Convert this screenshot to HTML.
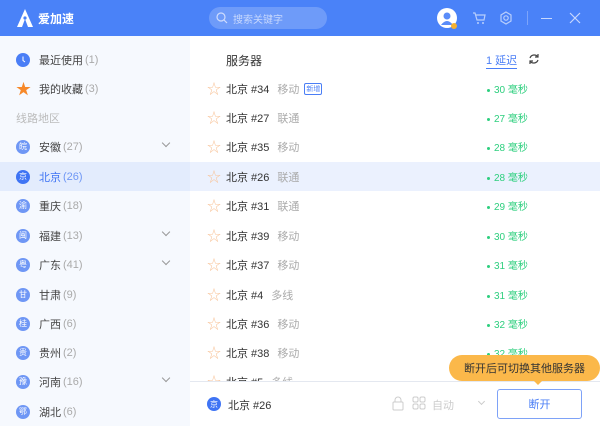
<!DOCTYPE html>
<html><head><meta charset="utf-8">
<style>
*{margin:0;padding:0;box-sizing:border-box}
body{width:600px;height:426px;overflow:hidden;font-family:"Liberation Sans","Noto Sans CJK SC",sans-serif;font-size:11px;color:#333;background:#fff;position:relative}
.hd{position:absolute;left:0;top:0;width:600px;height:36px;background:#4a82f8}
.side{position:absolute;left:0;top:36px;width:190px;height:390px;background:#f6f9fe}
.ab{position:absolute}
.si{position:absolute;left:0;width:190px;height:29px;display:flex;align-items:center;padding-left:16px;color:#444}
.si .c{width:14px;height:14px;border-radius:50%;background:#6f97f5;color:#fff;font-size:8px;display:flex;align-items:center;justify-content:center;margin-right:9px}
.si .n{color:#aaa;margin-left:2px}
.si .ch{position:absolute;left:163px;top:8px;width:6px;height:6px;border-right:1px solid #999;border-bottom:1px solid #999;transform:rotate(45deg)}
.r{position:absolute;left:190px;width:410px;height:29px;display:flex;align-items:center;padding-left:17px}
.r .st{color:#f8c49a;font-size:14px;width:19px}
.r .nm{color:#333}
.r .t{color:#aaa;margin-left:8px}
.r .ms{position:absolute;left:297px;color:#2dcf7e;font-size:10px}
.r .ms:before{content:"";display:inline-block;width:3px;height:3px;border-radius:50%;background:#2dcf7e;margin-right:4px;vertical-align:middle}
</style></head><body>
<div class="hd">
 <svg class="ab" style="left:16px;top:8px" width="18" height="20" viewBox="0 0 18 20"><path d="M9 1 L17 19 L12 19 L9 11 L6 19 L1 19 Z" fill="#fff"/><circle cx="9" cy="10" r="1.6" fill="#4a82f8"/></svg>
 <div class="ab" style="left:38px;top:10px;color:#fff;font-size:12px;font-weight:bold">爱加速</div>
 <div class="ab" style="left:209px;top:7px;width:118px;height:22px;border-radius:11px;background:#6e9bf9"></div>
 <svg class="ab" style="left:216px;top:12px" width="12" height="12"><circle cx="5" cy="5" r="4" stroke="#cfdcfd" fill="none" stroke-width="1.2"/><line x1="8" y1="8" x2="11" y2="11" stroke="#cfdcfd" stroke-width="1.2"/></svg>
 <div class="ab" style="left:233px;top:11px;color:#c8d8fd;font-size:10px">搜索关键字</div>
 <div class="ab" style="left:437px;top:8px;width:20px;height:20px;border-radius:50%;background:#fff"></div>
 <svg class="ab" style="left:437px;top:8px" width="22" height="22"><circle cx="10" cy="8" r="3.5" fill="#5a8cf9"/><path d="M4 17 Q10 9 16 17" fill="#5a8cf9"/><circle cx="17" cy="18" r="3" fill="#f5b030"/></svg>
 <svg class="ab" style="left:472px;top:11px" width="14" height="14"><path d="M1 2h2l2 7h7l1-5H4" stroke="#b8cefc" fill="none" stroke-width="1.2"/><circle cx="6" cy="12" r="1" fill="#b8cefc"/><circle cx="11" cy="12" r="1" fill="#b8cefc"/></svg>
 <svg class="ab" style="left:499px;top:11px" width="14" height="14"><circle cx="7" cy="7" r="2.2" stroke="#b8cefc" fill="none" stroke-width="1.2"/><path d="M7 1 L12 4 L12 10 L7 13 L2 10 L2 4Z" stroke="#b8cefc" fill="none" stroke-width="1.2"/></svg>
 <div class="ab" style="left:527px;top:11px;width:1px;height:14px;background:#7da4fa"></div>
 <div class="ab" style="left:541px;top:18px;width:11px;height:1px;background:#c8d8fd"></div>
 <svg class="ab" style="left:569px;top:12px" width="12" height="12"><path d="M1 1L11 11M11 1L1 11" stroke="#c8d8fd" stroke-width="1.2"/></svg>
</div>
<div class="side"></div>
<div class="si" style="top:45px"><svg width="14" height="14" style="margin-right:9px"><circle cx="7" cy="7" r="7" fill="#4a7ef6"/><path d="M7 3.5v4l2 1.5" stroke="#fff" fill="none"/></svg>最近使用<span class="n">(1)</span></div>
<div class="si" style="top:74px"><span style="color:#f7892a;font-size:15px;margin-right:8px">★</span>我的收藏<span class="n">(3)</span></div>
<div class="si" style="top:103px;color:#bbb">线路地区</div>
<div class="si" style="top:132px"><span class="c">皖</span>安徽<span class="n">(27)</span><span class="ch"></span></div>
<div class="si" style="top:162px;background:#e3ecfd;color:#3f74f4"><span class="c" style="background:#3f74f4">京</span>北京<span class="n" style="color:#6f97f5">(26)</span></div>
<div class="si" style="top:191px"><span class="c">渝</span>重庆<span class="n">(18)</span></div>
<div class="si" style="top:221px"><span class="c">闽</span>福建<span class="n">(13)</span><span class="ch"></span></div>
<div class="si" style="top:250px"><span class="c">粤</span>广东<span class="n">(41)</span><span class="ch"></span></div>
<div class="si" style="top:280px"><span class="c">甘</span>甘肃<span class="n">(9)</span></div>
<div class="si" style="top:309px"><span class="c">桂</span>广西<span class="n">(6)</span></div>
<div class="si" style="top:338px"><span class="c">贵</span>贵州<span class="n">(2)</span></div>
<div class="si" style="top:367px"><span class="c">豫</span>河南<span class="n">(16)</span><span class="ch"></span></div>
<div class="si" style="top:397px"><span class="c">鄂</span>湖北<span class="n">(6)</span></div>

<div class="ab" style="left:226px;top:52px;font-size:12px;color:#333">服务器</div>
<div class="ab" style="left:486px;top:52px;color:#4a7ef6;border-bottom:1px solid #4a7ef6;font-size:11px">1 延迟</div>
<svg class="ab" style="left:528px;top:53px" width="12" height="12"><path d="M2 5A4.5 4.5 0 0 1 10 4M10 7A4.5 4.5 0 0 1 2 8" stroke="#444" fill="none" stroke-width="1.2"/><path d="M10 1v3h-3M2 11v-3h3" stroke="#444" fill="none" stroke-width="1.2"/></svg>

<div class="r" style="top:74px"><span class="st">☆</span><span class="nm">北京 #34</span><span class="t">移动</span><span style="margin-left:5px;border:1px solid #4a7ef6;color:#4a7ef6;font-size:7px;padding:0 1px;border-radius:2px">新增</span><span class="ms">30 毫秒</span></div>
<div class="r" style="top:103px"><span class="st">☆</span><span class="nm">北京 #27</span><span class="t">联通</span><span class="ms">27 毫秒</span></div>
<div class="r" style="top:132px"><span class="st">☆</span><span class="nm">北京 #35</span><span class="t">移动</span><span class="ms">28 毫秒</span></div>
<div class="r" style="top:162px;background:#ebf1fe"><span class="st">☆</span><span class="nm">北京 #26</span><span class="t">联通</span><span class="ms">28 毫秒</span></div>
<div class="r" style="top:191px"><span class="st">☆</span><span class="nm">北京 #31</span><span class="t">联通</span><span class="ms">29 毫秒</span></div>
<div class="r" style="top:221px"><span class="st">☆</span><span class="nm">北京 #39</span><span class="t">移动</span><span class="ms">30 毫秒</span></div>
<div class="r" style="top:250px"><span class="st">☆</span><span class="nm">北京 #37</span><span class="t">移动</span><span class="ms">31 毫秒</span></div>
<div class="r" style="top:280px"><span class="st">☆</span><span class="nm">北京 #4</span><span class="t">多线</span><span class="ms">31 毫秒</span></div>
<div class="r" style="top:309px"><span class="st">☆</span><span class="nm">北京 #36</span><span class="t">移动</span><span class="ms">32 毫秒</span></div>
<div class="r" style="top:338px"><span class="st">☆</span><span class="nm">北京 #38</span><span class="t">移动</span><span class="ms">32 毫秒</span></div>
<div class="r" style="top:367px"><span class="st">☆</span><span class="nm">北京 #5</span><span class="t">多线</span></div>

<div class="ab" style="left:190px;top:381px;width:410px;height:45px;background:#fff;border-top:1px solid #e4e8f0"></div>
<div class="ab" style="left:207px;top:397px;width:14px;height:14px;border-radius:50%;background:#3f74f4;color:#fff;font-size:8px;display:flex;align-items:center;justify-content:center">京</div>
<div class="ab" style="left:228px;top:397px;color:#333">北京 #26</div>
<svg class="ab" style="left:392px;top:396px" width="40" height="15"><rect x="1" y="6" width="10" height="8" rx="1" stroke="#ccc" fill="none"/><path d="M3 6V4a3 3 0 0 1 6 0v2" stroke="#ccc" fill="none"/><rect x="21" y="1" width="5" height="5" rx="1.5" stroke="#ccc" fill="none"/><rect x="28" y="1" width="5" height="5" rx="1.5" stroke="#ccc" fill="none"/><rect x="21" y="8" width="5" height="5" rx="1.5" stroke="#ccc" fill="none"/><rect x="28" y="8" width="5" height="5" rx="1.5" stroke="#ccc" fill="none"/></svg>
<div class="ab" style="left:432px;top:397px;color:#ccc">自动</div>
<div class="ab" style="left:479px;top:399px;width:5px;height:5px;border-right:1px solid #ccc;border-bottom:1px solid #ccc;transform:rotate(45deg)"></div>
<div class="ab" style="left:497px;top:389px;width:85px;height:30px;border:1px solid #7ea2f7;border-radius:3px;color:#4a7ef6;display:flex;align-items:center;justify-content:center;font-size:11px">断开</div>
<div class="ab" style="left:449px;top:355px;width:151px;height:26px;background:#fbb84a;border-radius:13px;color:#333;font-size:11px;display:flex;align-items:center;justify-content:center">断开后可切换其他服务器</div>
<div class="ab" style="left:533px;top:380px;width:0;height:0;border-left:5px solid transparent;border-right:5px solid transparent;border-top:5px solid #fbb84a"></div>
</body></html>
